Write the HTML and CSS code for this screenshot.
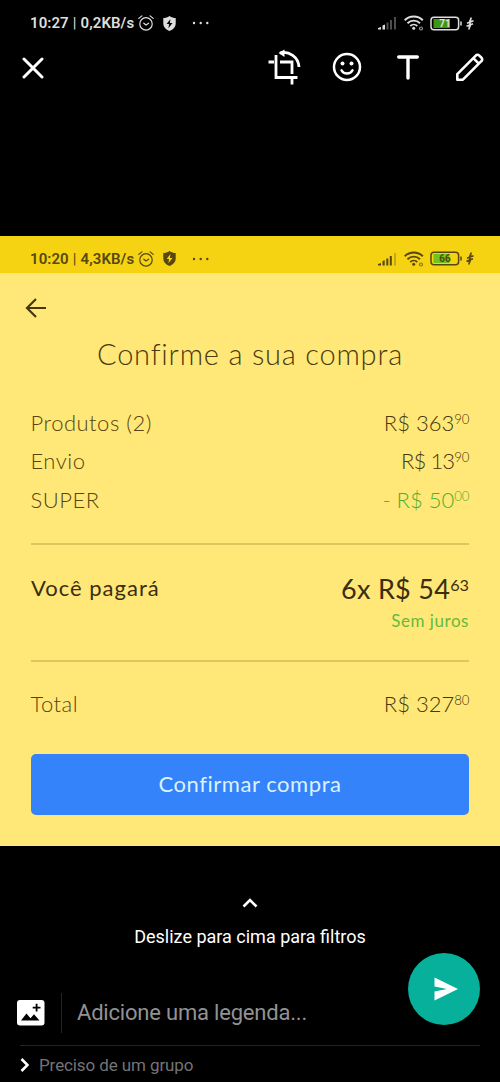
FILE: index.html
```html
<!DOCTYPE html>
<html lang="pt-BR">
<head>
<meta charset="utf-8">
<title>Confirme a sua compra</title>
<link rel="stylesheet" href="styles.css">
</head>
<body>
<svg class="defs" width="0" height="0" aria-hidden="true">
  <symbol id="alarm" viewBox="0 0 16 16"><g fill="none" stroke="currentColor" stroke-width="1.2" stroke-linecap="round" stroke-linejoin="round"><circle cx="8" cy="8.9" r="6.2"/><path d="M5.8 8.2 8 10l2.6-1.8M.8 3.4 3.9.9M15.2 3.4 12.1.9"/></g></symbol>
  <symbol id="shield" viewBox="0 0 13 15"><path fill="currentColor" d="M6.5 0C8.6 1.5 10.6 2 12.7 2.1v5.6c0 3.2-2.4 5.6-6.2 7.3C2.7 13.3.3 10.9.3 7.7V2.1C2.4 2 4.4 1.5 6.5 0Z"/><path class="shield-bolt" d="M7.5 3 3.6 8h2.5l-.7 4.2L9.5 6.9H6.9Z"/></symbol>
  <symbol id="wifi" viewBox="0 0 20 16"><g fill="none" stroke="currentColor" stroke-width="1.9"><path d="M.7 5.2C5.7.3 13.8.3 18.8 5.2M3.5 8.2c3.5-3.4 9-3.4 12.5 0M6.3 11c2-1.900 5-1.900 7 0"/></g><circle cx="9.7" cy="13.2" r="1.5" fill="currentColor"/><circle cx="17" cy="13.5" r="1.5" fill="none" stroke="currentColor" stroke-width="1.2" opacity=".65"/></symbol>
  <symbol id="bolt" viewBox="0 0 8 13"><path d="M5.3.5 3.5 5M4.500 8 2.700 12.500M7.500 3.800 1 6.200M7 6.800.5 9.200M4.800 2 3.200 11" fill="none" stroke="currentColor" stroke-width="1.6"/></symbol>
</svg>

<header class="status status-outer">
  <span class="clock">10:27<i>|</i>0,2KB/s</span>
  <svg class="alarm"><use href="#alarm"/></svg>
  <svg class="shield"><use href="#shield"/></svg>
  <svg class="dots" viewBox="0 0 18 4" fill="currentColor"><circle cx="2" cy="2" r="1.2"/><circle cx="8.7" cy="2" r="1.2"/><circle cx="15.3" cy="2" r="1.2"/></svg>
  <svg class="signal" viewBox="0 0 19 14" fill="currentColor"><path d="M0 13.5V12l3-1v2.5ZM4.5 13.5v-4l2.500-1v5Z"/><path opacity=".35" d="M8.5 6.5h2v7h-2ZM12 4h2v9.500h-2ZM16 1h2v12.500h-2Z"/></svg>
  <svg class="wifi"><use href="#wifi"/></svg>
  <svg class="battery" viewBox="0 0 33 15"><rect x="3.5" y="3" width="16.5" height="9" fill="#3c9a12"/><rect x="1" y="1.2" width="27.6" height="12.6" rx="3" fill="none" stroke="currentColor" stroke-width="1.5"/><path d="M31 5.5v4" stroke="currentColor" stroke-width="1.5"/><text x="15" y="11.3" text-anchor="middle">71</text></svg>
  <svg class="bolt"><use href="#bolt"/></svg>
</header>

<nav class="toolbar">
  <svg class="close" viewBox="0 0 22 22"><path d="m2 2 18 18M20 2 2 20"/></svg>
  <svg class="crop" viewBox="0 0 34 36"><path d="M1.500 13h5.500M9 11v17.500h21.500M13 13h12v12M25 30v5.500M9 6v7M13 3.800C22 1.500 31.500 8 32 18"/><path class="solid" d="m11.500 4 6-3.500V8Z"/></svg>
  <svg class="smile" viewBox="0 0 30 30"><circle cx="15" cy="15" r="13"/><path d="M9.500 18.300c2.200 4.400 8.800 4.400 11 0"/><ellipse class="solid" cx="10.5" cy="11.5" rx="2" ry="2.1"/><ellipse class="solid" cx="19.5" cy="11.5" rx="2" ry="2.1"/></svg>
  <svg class="type" viewBox="0 0 22 25"><path d="M1.700 2h18.600M11 2v21"/></svg>
  <svg class="pencil" viewBox="0 0 30 30"><path d="M2.300 27.700v-5.600L20.300 4.200c1.200-1.600 2.600-1.900 4-.6l2.100 2.100c1.300 1.400 1 2.800-.6 4L7.900 27.700ZM18.300 6.200l5.500 5.500"/></svg>
</nav>

<main class="shot">
  <div class="status status-inner">
    <span class="clock">10:20<i>|</i>4,3KB/s</span>
    <svg class="alarm"><use href="#alarm"/></svg>
    <svg class="shield"><use href="#shield"/></svg>
    <svg class="dots" viewBox="0 0 18 4" fill="currentColor"><circle cx="2" cy="2" r="1.2"/><circle cx="8.7" cy="2" r="1.2"/><circle cx="15.3" cy="2" r="1.2"/></svg>
    <svg class="signal" viewBox="0 0 19 14" fill="currentColor"><path d="M0 13.500v-1.500l3-1v2.500ZM4.500 13.500V9l2.200-.7v5.200ZM8.300 6.500h2v7h-2ZM11.800 4h2v9.500h-2Z"/><path opacity=".3" d="M16 1h2v12.500h-2Z"/></svg>
    <svg class="wifi"><use href="#wifi"/></svg>
    <svg class="battery" viewBox="0 0 33 15"><rect x="3.5" y="3" width="16" height="9" fill="#70c51b"/><rect x="1" y="1.2" width="27.6" height="12.6" rx="3" fill="none" stroke="currentColor" stroke-width="1.5"/><path d="M31 5.5v4" stroke="currentColor" stroke-width="1.5"/><text x="15" y="11.3" text-anchor="middle">66</text></svg>
    <svg class="bolt"><use href="#bolt"/></svg>
  </div>
  <svg class="back" viewBox="0 0 22 20"><path d="M21 10H2M11 1 2 10l9 9"/></svg>
  <h1 class="title">Confirme a sua compra</h1>
  <section class="summary">
    <div class="row"><span>Produtos (2)</span><span class="price">R$ 363<sup>90</sup></span></div>
    <div class="row"><span>Envio</span><span class="price price-narrow">R$ 13<sup>90</sup></span></div>
    <div class="row"><span>SUPER</span><span class="price discount">- R$ 50<sup>00</sup></span></div>
  </section>
  <section class="payment">
    <span class="pay-label">Você pagará</span>
    <div class="pay-value"><span class="installment">6x R$ 54<sup>63</sup></span><span class="interest">Sem juros</span></div>
  </section>
  <section class="total row"><span>Total</span><span class="price">R$ 327<sup>80</sup></span></section>
  <button class="confirm">Confirmar compra</button>
</main>

<footer class="editor">
  <svg class="up" viewBox="0 0 16 10"><path d="m1.500 8.500 6.500-6.500 6.500 6.500"/></svg>
  <p class="hint">Deslize para cima para filtros</p>
  <div class="caption">
    <svg class="picture" viewBox="0 0 28 26"><rect width="27.5" height="25.5" rx="3" fill="#fff"/><path d="m4 20.500 5.500-7 4 4.800 3.500-4 5.500 6.200ZM15.700 6.700h3V3.700h1.800v3h3v1.800h-3v3h-1.800v-3h-3Z" fill="#000"/></svg>
    <span class="caption-text">Adicione uma legenda...</span>
    <div class="send"><svg viewBox="0 0 24 24"><path d="M.5.5 24 12 .5 23.500v-9L13 12 .5 9.500Z" fill="#fff"/></svg></div>
  </div>
  <div class="recipient"><svg class="next" viewBox="0 0 9 14"><path d="m1.500 1 6 6-6 6"/></svg><span>Preciso de um grupo</span></div>
</footer>
</body>
</html>
```
FILE: styles.css
```css
* { box-sizing: border-box; }
body { margin: 0; width: 500px; height: 1082px; overflow: hidden; background: #000; color: #fff; font-family: Roboto, "Liberation Sans", sans-serif; }
svg { display: block; flex: none; }
.defs { position: absolute; }

.status { display: flex; align-items: center; padding: 8px 0 0 30px; }
.status-outer { height: 38px; color: #dedede; --hole: #000; }
.status-inner { height: 37px; color: #574710; background: #f5d313; --hole: #f5d313; }
.clock { width: 108px; font-family: Roboto, sans-serif; font-size: 15px; font-weight: 600; line-height: 20px; letter-spacing: .08px; white-space: nowrap; }
.clock i { font-style: normal; font-weight: 400; margin: 0 4px; }
.alarm { width: 16px; height: 16px; margin-right: 9px; }
.shield { width: 13px; height: 15px; margin-right: 16px; }
.shield-bolt { fill: var(--hole); }
.dots { width: 18px; height: 4px; }
.signal { width: 19px; height: 14px; margin-left: 168px; }
.wifi { width: 20px; height: 16px; margin-left: 7px; }
.battery { width: 33px; height: 15px; margin-left: 6px; fill: currentColor; font: 700 10px Roboto, sans-serif; }
.bolt { width: 8px; height: 13px; margin-left: 3px; }

.toolbar { display: flex; align-items: center; height: 58px; padding-left: 22px; }
.toolbar svg { fill: none; stroke: #fff; stroke-width: 3; stroke-linecap: round; stroke-linejoin: round; }
.toolbar .solid { fill: #fff; stroke: none; }
.toolbar .close { width: 22px; height: 22px; margin-top: 1px; }
.toolbar .crop { width: 34px; height: 36px; margin-left: 223px; stroke-width: 2.8; stroke-linecap: butt; stroke-linejoin: miter; }
.toolbar .smile { width: 30px; height: 30px; margin-left: 31px; stroke-width: 2.5; }
.toolbar .type { width: 22px; height: 25px; margin-left: 35px; stroke-width: 3.4; }
.toolbar .pencil { width: 30px; height: 30px; margin-left: 36px; stroke-width: 2.6; }

.shot { display: flex; flex-direction: column; height: 610px; margin-top: 140px; background: #ffe877; color: #57450f; font-family: Lato, "Open Sans", sans-serif; font-weight: 300; }
.back { width: 22px; height: 20px; margin: 25px 0 0 25px; fill: none; stroke: #453710; stroke-width: 2.2; }
.title { margin: 16px 0 0; height: 40px; line-height: 40px; text-align: center; font-size: 29px; font-weight: 300; letter-spacing: .8px; color: #4a3a0f; }
.summary { height: 115px; margin: 30px 30.5px 0; display: flex; flex-direction: column; }
.row { display: flex; justify-content: space-between; height: 38.3px; line-height: 38px; font-size: 22px; letter-spacing: .5px; }
.price { color: #46370d; letter-spacing: 0; }
.price-narrow { letter-spacing: -.9px; }
sup { font-size: .6em; line-height: 0; letter-spacing: 0; vertical-align: .5em; }
.discount { color: #4fae2f; }
.payment { display: flex; justify-content: space-between; height: 119px; margin: 24px 31px 0; border: solid #dfc75e; border-width: 2px 0; color: #3a2d12; }
.pay-label { margin-top: 24px; line-height: 38px; font-size: 22px; font-weight: 400; letter-spacing: 1px; }
.pay-value { display: flex; flex-direction: column; align-items: flex-end; padding-top: 24px; }
.installment { font-size: 27px; line-height: 40px; font-weight: 400; letter-spacing: .3px; }
.interest { font-size: 17px; line-height: 24px; font-weight: 400; letter-spacing: .55px; color: #65ba3e; }
.total { margin: 23px 30.5px 0; }
.confirm { width: 438px; height: 61px; margin: 31px 0 0 31px; padding: 0 0 2px; border: 0; border-radius: 5px; background: #3483fa; color: #dcf2ff; font: 400 22px Lato, sans-serif; letter-spacing: .55px; }

.editor { height: 236px; }
.up { width: 16px; height: 10px; margin: 0 auto; transform: translateY(52px); fill: none; stroke: #fff; stroke-width: 2.6; }
.hint { margin: 69px 0 0; text-align: center; font-size: 18px; line-height: 24px; }
.caption { display: flex; align-items: center; height: 97px; margin: 0 20px; border-bottom: 1px solid #242424; }
.picture { width: 28px; height: 26px; margin: 31px 16px 0 -3px; }
.caption-text { margin-top: 32px; height: 40px; padding-left: 15px; border-left: 1px solid #242424; line-height: 40px; font-size: 22px; letter-spacing: -.2px; color: #929292; flex: 1; }
.send { display: flex; align-items: center; justify-content: center; width: 72px; height: 72px; margin-top: -16px; border-radius: 50%; background: #07b09b; }
.send svg { width: 24px; height: 24px; margin-left: 4px; }
.recipient { display: flex; align-items: center; gap: 10px; height: 37px; padding-left: 20px; font-size: 17px; letter-spacing: -.1px; color: #747474; }
.next { width: 9px; height: 14px; fill: none; stroke: #fff; stroke-width: 2.6; }
```
